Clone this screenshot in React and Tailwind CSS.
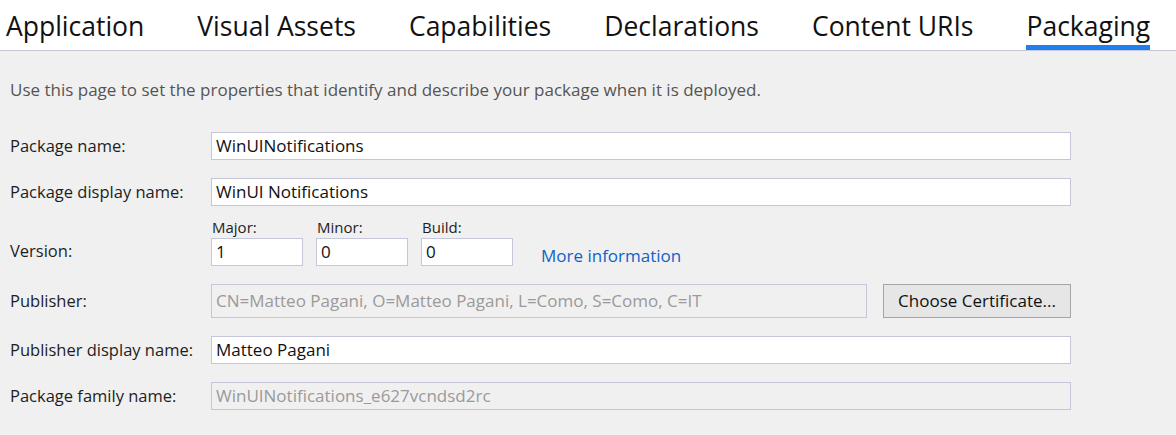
const tabs = ['Application', 'Visual Assets', 'Capabilities', 'Declarations', 'Content URIs', 'Packaging'];

function Field({ value, disabled, className = '' }) {
  return (
    <div
      className={`h-[28px] border border-[#c5c6da] px-[4px] flex items-center text-[17px] ${
        disabled ? 'bg-[#f0f0f0] text-[#9a9a9a]' : 'bg-white text-[#111]'
      } ${className}`}
    >
      {value}
    </div>
  );
}

function Row({ label, children, className = '' }) {
  return (
    <div className={`flex items-center ${className}`}>
      <div className="w-[201px] text-[16.5px] text-[#1e1e1e]">{label}</div>
      {children}
    </div>
  );
}

export default function App() {
  return (
    <div className="w-[1176px] h-[435px] bg-[#f0f0f0] overflow-hidden" style={{ fontFamily: '"Open Sans", "Noto Sans", sans-serif' }}>
      <div className="h-[51px] bg-white border-b border-[#c6c6dc] flex pl-[6px] gap-[53px]">
        {tabs.map((t) => (
          <div
            key={t}
            className={`h-[50px] pt-[9px] text-[26.5px] leading-[34px] text-[#111] border-b-[5px] ${
              t === 'Packaging' ? 'border-[#1f7ff0]' : 'border-transparent'
            }`}
          >
            {t}
          </div>
        ))}
      </div>

      <div className="pl-[10px] pr-[105px]">
        <p className="mt-[28px] text-[17px] leading-[22px] text-[#555]">
          Use this page to set the properties that identify and describe your package when it is deployed.
        </p>

        <Row label="Package name:" className="mt-[31px]">
          <Field value="WinUINotifications" className="flex-1" />
        </Row>

        <Row label="Package display name:" className="mt-[18px]">
          <Field value="WinUI Notifications" className="flex-1" />
        </Row>

        <div className="flex items-end mt-[12px]">
          <div className="w-[201px] text-[16.5px] text-[#1e1e1e] mb-[2px]">Version:</div>
          <div className="flex gap-[13px]">
            {[
              ['Major:', '1'],
              ['Minor:', '0'],
              ['Build:', '0'],
            ].map(([l, v]) => (
              <div key={l} className="flex flex-col">
                <span className="text-[15px] leading-[19px] text-[#1e1e1e] pl-[1px] mb-[1px]">{l}</span>
                <Field value={v} className="w-[92px]" />
              </div>
            ))}
          </div>
          <a className="ml-[28px] mb-[-2px] text-[17px] text-[#0f62c8]">More information</a>
        </div>

        <Row label="Publisher:" className="mt-[18px]">
          <div className="flex flex-1 gap-[16px]">
            <Field value="CN=Matteo Pagani, O=Matteo Pagani, L=Como, S=Como, C=IT" disabled className="flex-1 h-[34px]" />
            <button className="w-[188px] h-[34px] border border-[#a5a5a5] bg-[#e6e6e6] text-[17px] text-[#111]">
              Choose Certificate...
            </button>
          </div>
        </Row>

        <Row label="Publisher display name:" className="mt-[18px]">
          <Field value="Matteo Pagani" className="flex-1" />
        </Row>

        <Row label="Package family name:" className="mt-[18px]">
          <Field value="WinUINotifications_e627vcndsd2rc" disabled className="flex-1" />
        </Row>
      </div>
    </div>
  );
}
